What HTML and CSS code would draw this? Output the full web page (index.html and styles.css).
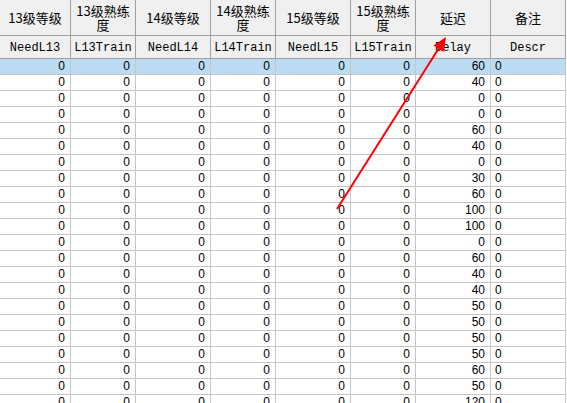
FILE: index.html
```html
<!DOCTYPE html>
<html>
<head>
<meta charset="utf-8">
<link rel="stylesheet" href="styles.css">
</head>
<body>
<div class="grid">
  <div class="row head1">
    <div class="hc">13级等级</div>
    <div class="hc">13级熟练度</div>
    <div class="hc">14级等级</div>
    <div class="hc">14级熟练度</div>
    <div class="hc">15级等级</div>
    <div class="hc">15级熟练度</div>
    <div class="hc">延迟</div>
    <div class="hc">备注</div>
  </div>
  <div class="row head2">
    <div class="hc">NeedL13</div>
    <div class="hc">L13Train</div>
    <div class="hc">NeedL14</div>
    <div class="hc">L14Train</div>
    <div class="hc">NeedL15</div>
    <div class="hc">L15Train</div>
    <div class="hc">Delay</div>
    <div class="hc">Descr</div>
  </div>
  <div id="body"></div>
</div>
<svg class="arrow" width="567" height="403" viewBox="0 0 567 403">
  <line x1="337" y1="209" x2="438.5" y2="48.8" stroke="#ff0000" stroke-width="2"/>
  <polygon points="446,37 443.6,52 433.4,45.6" fill="#ff0000"/>
</svg>
<script src="app.js"></script>
</body>
</html>
```
FILE: styles.css
```css
html, body {
  margin: 0;
  padding: 0;
  background: #ffffff;
  overflow: hidden;
  width: 567px;
  height: 403px;
}
.grid {
  width: 566px;
}
.row {
  display: grid;
  grid-template-columns: 71px 65px 75px 65px 75px 65px 75px 75px;
}
.row > div {
  box-sizing: border-box;
  border-right: 1px solid #c6c6c6;
  border-bottom: 1px solid #c6c6c6;
  overflow: hidden;
  white-space: nowrap;
}
.head1, .head2 {
  background: #f0f0f0;
}
.head1 > div, .head2 > div {
  border-color: #a0a0a0;
  display: flex;
  align-items: center;
  justify-content: center;
  text-align: center;
  color: #000;
}
.head1 {
  height: 36px;
}
.head1 > div {
  font-family: "Noto Sans CJK SC", "Noto Sans", sans-serif;
  font-size: 13px;
  line-height: 14px;
  white-space: normal;
  padding: 0 4px;
  word-break: break-all;
}
.head2 {
  height: 23px;
}
.head2 > div {
  font-family: "Liberation Mono", monospace;
  font-size: 12px;
  line-height: 14px;
  padding-top: 1px;
}
.data {
  height: 16px;
}
.data > div {
  font-family: "Liberation Sans", Arial, sans-serif;
  font-size: 12px;
  line-height: 15px;
  text-align: right;
  padding-right: 5px;
  color: #000;
}
.data > div.descr {
  text-align: left;
  padding-left: 4px;
  padding-right: 0;
}
.data.sel {
  background: #bcdcf4;
}
.arrow {
  position: absolute;
  left: 0;
  top: 0;
  pointer-events: none;
}
```
FILE: app.js
```js
var delays = [60,40,0,0,60,40,0,30,60,100,100,0,60,40,40,50,50,50,50,60,50,120];
var body = document.getElementById('body');
delays.forEach(function (d, i) {
  var row = document.createElement('div');
  row.className = 'row data' + (i === 0 ? ' sel' : '');
  for (var c = 0; c < 6; c++) {
    var cell = document.createElement('div');
    cell.textContent = '0';
    row.appendChild(cell);
  }
  var dc = document.createElement('div');
  dc.textContent = String(d);
  row.appendChild(dc);
  var ds = document.createElement('div');
  ds.className = 'descr';
  ds.textContent = '0';
  row.appendChild(ds);
  body.appendChild(row);
});
```
